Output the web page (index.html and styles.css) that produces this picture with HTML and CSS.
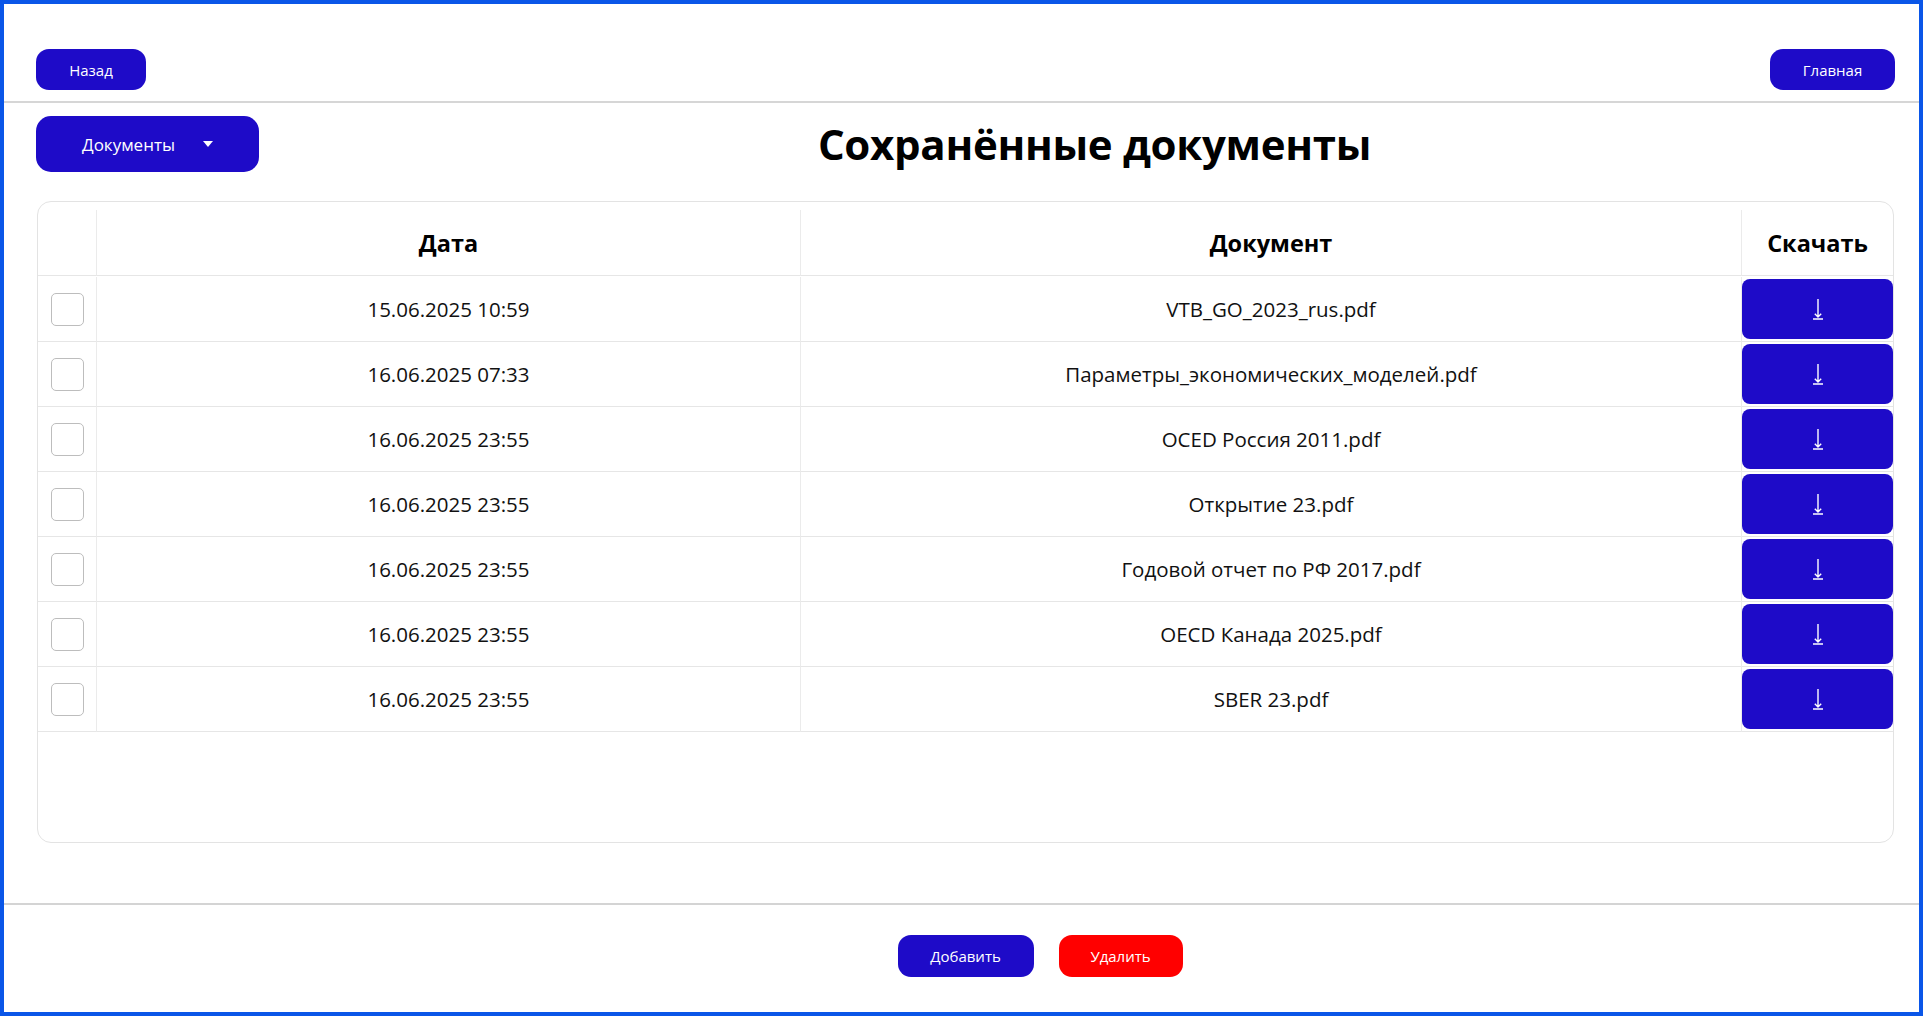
FILE: index.html
```html
<!DOCTYPE html>
<html lang="ru">
<head>
<meta charset="utf-8">
<title>Сохранённые документы</title>
<link rel="stylesheet" href="styles.css">
</head>
<body>
<div class="frame">
  <header class="topbar">
    <button class="btn btn-nav">Назад</button>
    <button class="btn btn-nav btn-home">Главная</button>
  </header>
  <main class="main">
    <div class="title-row">
      <button class="btn dropdown">Документы <span class="caret"></span></button>
      <h1 class="title">Сохранённые документы</h1>
    </div>
    <div class="card">
      <div class="grid">
        <div class="cell head chk"></div>
        <div class="cell head">Дата</div>
        <div class="cell head">Документ</div>
        <div class="cell head last">Скачать</div>

        <div class="cell chk"><span class="box"></span></div>
        <div class="cell">15.06.2025 10:59</div>
        <div class="cell">VTB_GO_2023_rus.pdf</div>
        <div class="cell last"><button class="dl"><svg width="12" height="22" viewBox="0 0 12 22"><path d="M6 1V19M2.8 15.8L6 19L9.2 15.8M1 21H11" fill="none" stroke="#fff" stroke-width="1.4"/></svg></button></div>

        <div class="cell chk"><span class="box"></span></div>
        <div class="cell">16.06.2025 07:33</div>
        <div class="cell">Параметры_экономических_моделей.pdf</div>
        <div class="cell last"><button class="dl"><svg width="12" height="22" viewBox="0 0 12 22"><path d="M6 1V19M2.8 15.8L6 19L9.2 15.8M1 21H11" fill="none" stroke="#fff" stroke-width="1.4"/></svg></button></div>

        <div class="cell chk"><span class="box"></span></div>
        <div class="cell">16.06.2025 23:55</div>
        <div class="cell">OCED Россия 2011.pdf</div>
        <div class="cell last"><button class="dl"><svg width="12" height="22" viewBox="0 0 12 22"><path d="M6 1V19M2.8 15.8L6 19L9.2 15.8M1 21H11" fill="none" stroke="#fff" stroke-width="1.4"/></svg></button></div>

        <div class="cell chk"><span class="box"></span></div>
        <div class="cell">16.06.2025 23:55</div>
        <div class="cell">Открытие 23.pdf</div>
        <div class="cell last"><button class="dl"><svg width="12" height="22" viewBox="0 0 12 22"><path d="M6 1V19M2.8 15.8L6 19L9.2 15.8M1 21H11" fill="none" stroke="#fff" stroke-width="1.4"/></svg></button></div>

        <div class="cell chk"><span class="box"></span></div>
        <div class="cell">16.06.2025 23:55</div>
        <div class="cell">Годовой отчет по РФ 2017.pdf</div>
        <div class="cell last"><button class="dl"><svg width="12" height="22" viewBox="0 0 12 22"><path d="M6 1V19M2.8 15.8L6 19L9.2 15.8M1 21H11" fill="none" stroke="#fff" stroke-width="1.4"/></svg></button></div>

        <div class="cell chk"><span class="box"></span></div>
        <div class="cell">16.06.2025 23:55</div>
        <div class="cell">OECD Канада 2025.pdf</div>
        <div class="cell last"><button class="dl"><svg width="12" height="22" viewBox="0 0 12 22"><path d="M6 1V19M2.8 15.8L6 19L9.2 15.8M1 21H11" fill="none" stroke="#fff" stroke-width="1.4"/></svg></button></div>

        <div class="cell chk"><span class="box"></span></div>
        <div class="cell">16.06.2025 23:55</div>
        <div class="cell">SBER 23.pdf</div>
        <div class="cell last"><button class="dl"><svg width="12" height="22" viewBox="0 0 12 22"><path d="M6 1V19M2.8 15.8L6 19L9.2 15.8M1 21H11" fill="none" stroke="#fff" stroke-width="1.4"/></svg></button></div>
      </div>
    </div>
  </main>
  <footer class="footer">
    <button class="btn btn-add">Добавить</button>
    <button class="btn btn-del">Удалить</button>
  </footer>
</div>
</body>
</html>
```

FILE: styles.css
```css
* { box-sizing: border-box; }
html, body { margin: 0; padding: 0; }
body {
  font-family: "Open Sans", "Noto Sans", sans-serif;
  color: #111;
  background: #fff;
}
.frame {
  width: 1923px;
  height: 1016px;
  border: 4px solid #0a56e8;
  display: flex;
  flex-direction: column;
}
.btn {
  font-family: inherit;
  border: none;
  color: #fff;
  background: #1e0bc8;
  cursor: pointer;
  padding: 0;
}
.topbar {
  display: flex;
  justify-content: space-between;
  align-items: flex-start;
  padding: 45px 24px 11px 32px;
  border-bottom: 2px solid #d6d6d6;
}
.btn-nav {
  width: 110px;
  height: 41px;
  border-radius: 13px;
  font-size: 15px;
}
.btn-home { width: 125px; }
.main {
  flex: 1;
  padding: 13px 25px 0 32px;
}
.title-row {
  display: flex;
  align-items: center;
}
.dropdown {
  width: 223px;
  height: 56px;
  border-radius: 15px;
  font-size: 17px;
  display: flex;
  align-items: center;
  justify-content: center;
  gap: 28px;
}
.caret {
  width: 0;
  height: 0;
  border-left: 5.5px solid transparent;
  border-right: 5.5px solid transparent;
  border-top: 6px solid #fff;
}
.title {
  flex: 1;
  margin: 0 0 0 36px;
  text-align: center;
  font-size: 42px;
  font-weight: 700;
  color: #000;
  letter-spacing: -0.3px;
  line-height: 1.2;
}
.card {
  margin: 29px 0 0 1px;
  height: 642px;
  border: 1px solid #e3e3e3;
  border-radius: 14px;
  padding-top: 8px;
  overflow: hidden;
}
.grid {
  display: grid;
  grid-template-columns: 59px 704px 941px 1fr;
  grid-template-rows: 67px;
  grid-auto-rows: 65px;
}
.cell {
  display: flex;
  align-items: center;
  justify-content: center;
  border-bottom: 1px solid #e6e6e6;
  border-right: 1px solid #ebebeb;
  font-size: 20.5px;
  color: #111;
}
.cell.last { border-right: none; }
.cell.head {
  font-size: 23.5px;
  font-weight: 700;
  color: #000;
  height: 66px;
  align-self: start;
}
.box {
  width: 33px;
  height: 33px;
  border: 1.5px solid #bdbdbd;
  border-radius: 5px;
  background: #fff;
}
.dl {
  width: 100%;
  height: 60px;
  border: none;
  border-radius: 8px;
  background: #1e0bc8;
  display: flex;
  align-items: center;
  justify-content: center;
  padding: 0;
  margin-top: 0;
}
.footer {
  border-top: 2px solid #d4d4d4;
  height: 109px;
  display: flex;
  justify-content: center;
  align-items: flex-start;
  gap: 25px;
  padding: 30px 0 0 157px;
}
.btn-add {
  width: 136px;
  height: 42px;
  border-radius: 13px;
  font-size: 15px;
}
.btn-del {
  width: 124px;
  height: 42px;
  border-radius: 13px;
  font-size: 15px;
  background: #ff0000;
}
```
